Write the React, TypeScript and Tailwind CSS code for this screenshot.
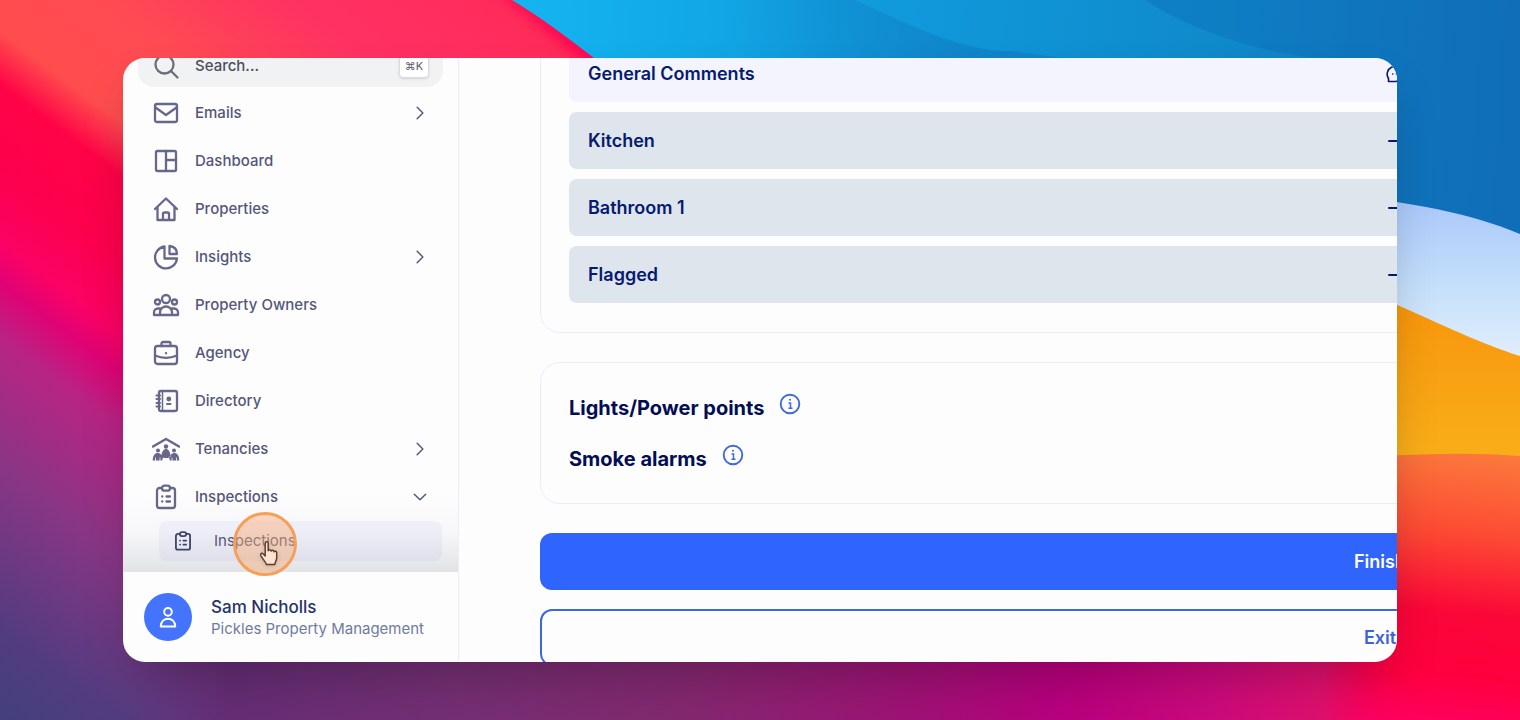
import type { ReactNode } from "react";

type IconProps = { children: ReactNode; className?: string };

function Icon({ children, className = "h-7 w-7" }: IconProps) {
  return (
    <svg
      viewBox="0 0 28 28"
      fill="none"
      stroke="currentColor"
      strokeWidth="2.3"
      strokeLinecap="round"
      strokeLinejoin="round"
      aria-hidden="true"
      className={`${className} shrink-0`}
    >
      {children}
    </svg>
  );
}

const clipboard = (
  <>
    <path d="M10 5H7.5A2.5 2.5 0 0 0 5 7.500v15A2.500 2.500 0 0 0 7.500 25h13a2.500 2.500 0 0 0 2.500-2.500v-15A2.500 2.500 0 0 0 20.500 5H18" />
    <path d="M12.500 2.700h3a2.500 2.500 0 0 1 0 5h-3a2.500 2.500 0 0 1 0-5z" />
    <path d="M14.500 13.500h3.500M14.500 18.500h3.500M10.200 13.500h.1M10.200 18.500h.1" />
  </>
);

type NavItem = { label: string; icon: ReactNode; arrow?: "right" | "down" };

const items: NavItem[] = [
  {
    label: "Emails",
    arrow: "right",
    icon: (
      <>
        <rect x="3" y="5" width="22" height="18" rx="2" />
        <path d="M3.500 8.500L14 16l10.500-7.500" />
      </>
    ),
  },
  {
    label: "Dashboard",
    icon: (
      <>
        <rect x="4" y="4" width="20" height="20" rx="1.5" />
        <path d="M14 4v20M14 13h10" />
      </>
    ),
  },
  {
    label: "Properties",
    icon: (
      <>
        <path d="M3 14L14 3.500 25 14M5.500 12V25h17V12" />
        <path d="M11 24v-5a1.500 1.500 0 0 1 1.500-1.500h3A1.500 1.500 0 0 1 17 19v5" />
      </>
    ),
  },
  {
    label: "Insights",
    arrow: "right",
    icon: (
      <>
        <path d="M12.500 3.500A11 11 0 1 0 25 15.500H12.500z" />
        <path d="M17.500 3v8H25C25 6.500 22 3.500 17.500 3z" />
      </>
    ),
  },
  {
    label: "Property Owners",
    icon: (
      <>
        <circle cx="14" cy="8" r="4" />
        <circle cx="5.500" cy="11" r="2.500" />
        <circle cx="22.500" cy="11" r="2.500" />
        <path d="M8 24v-2.500a6 6 0 0 1 12 0V24M8.500 17.500H6A4 4 0 0 0 2 21.500V24h24v-2.500a4 4 0 0 0-4-4h-2.500" />
      </>
    ),
  },
  {
    label: "Agency",
    icon: (
      <>
        <rect x="3" y="7" width="22" height="18" rx="2.500" />
        <path d="M9.500 7V4.500A1.500 1.500 0 0 1 11 3h6a1.500 1.500 0 0 1 1.500 1.500V7M3 16.500c7 3 15 3 22 0M14 14.200v.1" />
      </>
    ),
  },
  {
    label: "Directory",
    icon: (
      <>
        <rect x="7" y="4" width="18" height="20" rx="2" />
        <path d="M10.500 4v20" strokeWidth="1.500" />
        <path d="M4.500 8.500H8M4.500 12H8M4.500 16H8M4.500 19.500H8M15 17h3.500" strokeWidth="2" />
        <circle cx="16.800" cy="12" r="1.700" fill="currentColor" strokeWidth="1.500" />
      </>
    ),
  },
  {
    label: "Tenancies",
    arrow: "right",
    icon: (
      <>
        <path d="M1 11.500L14 4l13 7.500" strokeWidth="2.500" />
        <g fill="currentColor" stroke="none">
          <circle cx="14" cy="11.500" r="2.200" />
          <circle cx="6" cy="15.500" r="2" />
          <circle cx="22" cy="15.500" r="2" />
          <path d="M9.500 21.500c0-10 9-10 9 0l-2.500 1.500h-4zM.8 25.500c-.5-9 8-10 10.200-2.500l-1 2.500zM27.200 25.500c.5-9-8-10-10.200-2.500l1 2.500z" />
        </g>
        <path d="M3.500 25.500v-2.500M8 25.500v-2.500M20 25.500v-2.500M24.500 25.500v-2.500" stroke="#fdfdfe" strokeWidth="0.800" />
      </>
    ),
  },
  { label: "Inspections", arrow: "down", icon: clipboard },
];

const rooms = ["Kitchen", "Bathroom 1", "Flagged"];

function Backdrop() {
  return (
    <svg
      viewBox="0 0 1520 720"
      preserveAspectRatio="none"
      aria-hidden="true"
      className="absolute inset-0 h-full w-full"
    >
      <defs>
        <linearGradient id="warm" x1="180" y1="-240" x2="-346" y2="461" gradientUnits="userSpaceOnUse">
          <stop offset="0" stopColor="#ff2b5a" />
          <stop offset="0.14" stopColor="#ff3163" />
          <stop offset="0.27" stopColor="#ff4a53" />
          <stop offset="0.37" stopColor="#ff4d4e" />
          <stop offset="0.42" stopColor="#ff0347" />
          <stop offset="0.5" stopColor="#fd004e" />
          <stop offset="0.565" stopColor="#fb0265" />
          <stop offset="0.6" stopColor="#e00376" />
          <stop offset="0.65" stopColor="#b82483" />
          <stop offset="0.77" stopColor="#883685" />
          <stop offset="0.92" stopColor="#513c80" />
          <stop offset="1" stopColor="#43407c" />
        </linearGradient>
        <linearGradient id="base" x1="0" y1="0" x2="1520" y2="0" gradientUnits="userSpaceOnUse">
          <stop offset="0.081" stopColor="#5b347c" stopOpacity="0" />
          <stop offset="0.15" stopColor="#652d75" />
          <stop offset="0.3" stopColor="#752f74" />
          <stop offset="0.45" stopColor="#842870" />
          <stop offset="0.6" stopColor="#9f1275" />
          <stop offset="0.7" stopColor="#b9007e" />
          <stop offset="0.8" stopColor="#cc0a7c" />
          <stop offset="0.87" stopColor="#df106e" />
          <stop offset="0.919" stopColor="#fa0058" stopOpacity="0" />
        </linearGradient>
        <linearGradient id="sea" x1="512" y1="0" x2="1520" y2="60" gradientUnits="userSpaceOnUse">
          <stop offset="0" stopColor="#14b5f1" />
          <stop offset="0.35" stopColor="#109bdd" />
          <stop offset="0.7" stopColor="#0f8acb" />
          <stop offset="1" stopColor="#1171ba" />
        </linearGradient>
        <linearGradient id="wave" x1="740" y1="60" x2="980" y2="30" gradientUnits="userSpaceOnUse">
          <stop offset="0" stopColor="#1180c6" stopOpacity="0" />
          <stop offset="1" stopColor="#1180c6" stopOpacity="0.8" />
        </linearGradient>
        <linearGradient id="lens" x1="0" y1="0" x2="0" y2="1">
          <stop offset="0" stopColor="#a9c6fb" />
          <stop offset="0.55" stopColor="#c4e0fb" />
          <stop offset="1" stopColor="#e3effd" />
        </linearGradient>
        <linearGradient id="sun" x1="0" y1="0" x2="0" y2="1">
          <stop offset="0" stopColor="#f9920a" />
          <stop offset="1" stopColor="#f8b01a" />
        </linearGradient>
        <linearGradient id="ember" x1="1380" y1="440" x2="1350" y2="720" gradientUnits="userSpaceOnUse">
          <stop offset="0" stopColor="#fb7a3c" />
          <stop offset="0.3" stopColor="#fd4a33" />
          <stop offset="0.58" stopColor="#fb0638" />
          <stop offset="0.8" stopColor="#ff003e" />
          <stop offset="1" stopColor="#ff0062" />
        </linearGradient>
        <filter id="soft" x="-30%" y="-30%" width="160%" height="160%">
          <feGaussianBlur stdDeviation="7" />
        </filter>
      </defs>
      <rect width="1520" height="720" fill="url(#warm)" />
      <path d="M500 -20L620 80" stroke="#ff0050" strokeWidth="16" filter="url(#soft)" />
      <path d="M1280 440H1520V720H1280z" fill="url(#ember)" />
      <rect y="600" width="1520" height="120" fill="url(#base)" />
      <path d="M512 0C540 17 567 37 594 58L700 260H1520V0z" fill="url(#sea)" />
      <path d="M855 0C900 20 960 52 1010 51L1080 60H700V0z" fill="url(#wave)" />
      <path d="M1145 0C1190 30 1260 52 1315 58L1380 260H1520V0z" fill="#0d66b4" opacity="0.35" />
      <path d="M1340 195C1410 202 1470 213 1520 234V362L1340 300z" fill="url(#lens)" />
      <path d="M1340 470V280C1430 318 1470 340 1520 356V470z" fill="url(#sun)" />
      <path d="M1340 500V458C1400 455 1460 451 1520 456V500z" fill="url(#ember)" />
    </svg>
  );
}

function Chevron({ arrow }: { arrow: "right" | "down" }) {
  return (
    <Icon className="h-4 w-4">
      <path
        d={arrow === "right" ? "M9 4l10 10L9 24" : "M4 9l10 10L24 9"}
        strokeWidth="2.500"
      />
    </Icon>
  );
}

function Sidebar() {
  return (
    <aside className="flex w-[336px] shrink-0 flex-col border-r border-[#ececf6]">
      <div className="relative flex min-h-0 flex-1 flex-col justify-end overflow-hidden pb-[11px]">
        <label className="mx-[15px] mb-0.5 flex h-[42px] shrink-0 items-center gap-[15px] rounded-2xl bg-[#f0f2f4] px-[14px] text-[#6b6d7c]">
          <Icon>
            <circle cx="12.500" cy="12.500" r="9" />
            <path d="M19.500 19.500L25.500 25.500" />
          </Icon>
          <input
            type="text"
            placeholder="Search..."
            className="min-w-0 flex-1 bg-transparent text-[15px] font-medium outline-none placeholder:text-[#4b4f5c]"
          />
          <kbd className="flex h-6 w-[30px] items-center justify-center rounded border border-[#d9dbe2] bg-white font-['Inter','DejaVu_Sans',sans-serif] text-[11px] text-[#5b5d68] shadow-sm">
            ⌘K
          </kbd>
        </label>

        <nav className="shrink-0">
          {items.map((item) => (
            <a
              key={item.label}
              href="#"
              className="flex h-12 items-center gap-[15px] pr-[30px] pl-[29px] text-[15px] font-medium text-[#54567a]"
            >
              <span className="text-[#66678a]">
                <Icon>{item.icon}</Icon>
              </span>
              <span className="flex-1">{item.label}</span>
              {item.arrow && <Chevron arrow={item.arrow} />}
            </a>
          ))}
          <a
            href="#"
            className="mr-4 ml-9 flex h-10 items-center gap-5 rounded-lg bg-[#f3f3fc] px-[13px] text-[15px] text-[#56587a]"
          >
            <span className="text-[#42436c]">
              <Icon className="h-[22px] w-[22px]">{clipboard}</Icon>
            </span>
            Inspections
          </a>
        </nav>

        {/* Fade above the profile */}
        <div className="pointer-events-none absolute inset-x-0 bottom-0 h-20 bg-linear-to-t from-slate-700/14 via-slate-700/3 to-transparent" />
      </div>

      <div className="flex h-[90px] shrink-0 items-center gap-[19px] pl-[21px]">
        <div className="flex h-12 w-12 items-center justify-center rounded-full bg-[#4474fd] text-white">
          <Icon className="h-6 w-6">
            <circle cx="14" cy="8" r="4.500" />
            <path d="M5.500 25c0-12 17-12 17 0z" />
          </Icon>
        </div>
        <div>
          <p className="text-[17px] leading-6 font-medium text-[#253469]">
            Sam Nicholls
          </p>
          <p className="text-[15px] leading-5 text-[#707ba0]">
            Pickles Property Management
          </p>
        </div>
      </div>
    </aside>
  );
}

function InfoButton({ label }: { label: string }) {
  return (
    <button type="button" aria-label={label} className="mb-2 text-[#3f69dc]">
      <svg viewBox="0 0 22 22" fill="none" stroke="currentColor" className="h-[22px] w-[22px]">
        <circle cx="11" cy="11" r="9.300" strokeWidth="1.900" />
        <path d="M9.500 10h2v5M9.500 15.200h4" strokeWidth="1.500" />
        <circle cx="11" cy="6.800" r="1" fill="currentColor" stroke="none" />
      </svg>
    </button>
  );
}

function Inspection() {
  return (
    <main className="min-w-0 flex-1 overflow-hidden pl-[81px]">
      <div className="-mt-[42px] w-[1680px] text-lg font-semibold">
        <section className="flex flex-col gap-[10px] rounded-[20px] border border-[#ececf6] p-7 pb-[29px] text-[#051a70]">
          <button
            type="button"
            className="grid h-[57px] grid-cols-2 items-center rounded-lg bg-[#f4f4fe] px-[19px] text-left"
          >
            General Comments
            <Icon className="ml-[6px] h-5 w-5">
              <path d="M3.500 24.500V20A10.500 10.500 0 1 1 13.500 24.500zM9.500 14h.1M14.500 14h.1M19.500 14h.1" />
            </Icon>
          </button>
          {rooms.map((room) => (
            <button
              key={room}
              type="button"
              className="grid h-[57px] grid-cols-2 items-center rounded-lg bg-[#dfe5ed] px-[19px] text-left"
            >
              {room}
              <Icon className="ml-[6px] h-6 w-6">
                <path d="M3.500 14h21M16 6.500l8.500 7.500-8.500 7.500" />
              </Icon>
            </button>
          ))}
        </section>

        <section className="mt-[29px] flex h-[142px] flex-col justify-center gap-[21px] rounded-[20px] border border-[#ececf6] px-7 text-xl font-bold text-[#020d54]">
          <div className="flex h-[30px] items-center gap-[15px]">
            <h2>Lights/Power points</h2>
            <InfoButton label="About lights and power points" />
          </div>
          <div className="flex h-[30px] items-center gap-[15px]">
            <h2>Smoke alarms</h2>
            <InfoButton label="About smoke alarms" />
          </div>
        </section>

        <button
          type="button"
          className="mt-[29px] block h-[57px] w-full rounded-xl bg-[#3065fd] text-white"
        >
          Finish
        </button>
        <button
          type="button"
          className="mt-[19px] block h-[57px] w-full rounded-xl border-2 border-[#3c68df] text-[#3c64d8]"
        >
          Exit
        </button>
      </div>
    </main>
  );
}

function ClickMarker() {
  return (
    <div className="pointer-events-none absolute top-[454px] left-[110px] flex h-16 w-16 items-center justify-center rounded-full border-[3px] border-[#f5a05a] bg-[#f8a873]/45">
      <svg viewBox="0 0 24 28" className="mt-5 ml-2 h-7 w-6 drop-shadow">
        <path
          d="M8.200 3.500c0-2.200 3-2.200 3 0v7.300c.3-1.700 2.900-1.500 2.900.3.600-1.300 2.800-1 2.800.7.700-1 2.800-.7 2.800 1.200v4.500c0 3-1.500 4.500-2 7H9.500c-1-3-4-5.500-5.700-9-.8-1.900 1.200-2.900 2.500-1.500l1.900 2z"
          fill="#fde3d0"
          stroke="#5a4230"
          strokeWidth="1.500"
          strokeLinejoin="round"
        />
      </svg>
    </div>
  );
}

export default function App() {
  return (
    <div className="relative flex h-screen overflow-hidden px-[123px] py-[58px] font-['Inter',sans-serif]">
      <Backdrop />
      <div className="relative flex min-w-0 flex-1 overflow-hidden rounded-[22px] bg-[#fdfdfe] shadow-2xl">
        <Sidebar />
        <Inspection />
        <ClickMarker />
      </div>
    </div>
  );
}
